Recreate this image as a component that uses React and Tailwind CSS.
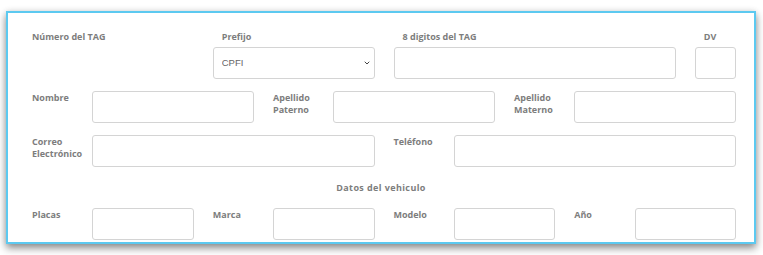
import { ChevronDown } from 'lucide-react';

const label = 'text-[9px] leading-[12px] font-bold text-[#7d7d7d] pr-[19px]';
const input = 'block w-full h-[32px] border border-[#d4d4d4] rounded-[3px] bg-white';

function Field({ span, children }) {
  return <div className={`${span} pr-[19px]`}>{children}</div>;
}

export default function App() {
  return (
    <div className="w-[763px] h-[255px] bg-white pt-[11px] pl-[6px]" style={{ fontFamily: "'Open Sans', sans-serif" }}>
      <div className="w-[750px] border-2 border-[#5cc9f0] bg-white shadow-[0_4px_8px_rgba(0,0,0,0.45),0_0_6px_rgba(0,0,0,0.08)] pl-[24px] pb-[2px]">
        <div className="w-[723px] grid grid-cols-[repeat(12,60.25px)]">
          {/* TAG */}
          <div className="col-span-3 pt-[18px]">
            <p className={label}>Número del TAG</p>
          </div>
          <div className="col-span-3 pr-[19px] pt-[18px]">
            <p className={`${label} pl-[9px]`}>Prefijo</p>
            <div className="relative mt-[4px]">
              <select className="appearance-none w-full h-[32px] border border-[#d4d4d4] rounded-[3px] bg-white pl-[8px] text-[9.5px] text-[#666]" style={{ fontFamily: "'Liberation Sans', sans-serif" }} defaultValue="CPFI">
                <option>CPFI</option>
              </select>
              <ChevronDown className="absolute right-[4px] top-[12px] w-[8px] h-[8px] text-[#444] pointer-events-none" strokeWidth={3} />
            </div>
          </div>
          <div className="col-span-5 pr-[19px] pt-[18px]">
            <p className={`${label} pl-[9px]`}>8 digitos del TAG</p>
            <div className={`${input} mt-[4px]`} />
          </div>
          <div className="col-span-1 pr-[19px] pt-[18px]">
            <p className={`${label} pl-[9px]`}>DV</p>
            <div className={`${input} mt-[4px]`} />
          </div>

          {/* Nombre */}
          <div className="col-span-1 pt-[13px]"><p className={label}>Nombre</p></div>
          <Field span="col-span-3"><div className={`${input} mt-[12px]`} /></Field>
          <div className="col-span-1 pt-[13px]"><p className={label}>Apellido Paterno</p></div>
          <Field span="col-span-3"><div className={`${input} mt-[12px]`} /></Field>
          <div className="col-span-1 pt-[13px]"><p className={label}>Apellido Materno</p></div>
          <Field span="col-span-3"><div className={`${input} mt-[12px]`} /></Field>

          {/* Contacto */}
          <div className="col-span-1 pt-[13px]"><p className={label}>Correo Electrónico</p></div>
          <Field span="col-span-5"><div className={`${input} mt-[12px]`} /></Field>
          <div className="col-span-1 pt-[13px]"><p className={label}>Teléfono</p></div>
          <Field span="col-span-5"><div className={`${input} mt-[12px]`} /></Field>
        </div>

        <p className="w-[746px] -ml-[24px] mt-[15px] text-center text-[9px] leading-[12px] font-bold text-[#7d7d7d] tracking-[0.4px]">Datos del vehiculo</p>

        <div className="w-[723px] grid grid-cols-[repeat(12,60.25px)] mt-[14px]">
          <div className="col-span-1 pt-[1px]"><p className={label}>Placas</p></div>
          <Field span="col-span-2"><div className={input} /></Field>
          <div className="col-span-1 pt-[1px]"><p className={label}>Marca</p></div>
          <Field span="col-span-2"><div className={input} /></Field>
          <div className="col-span-1 pt-[1px]"><p className={label}>Modelo</p></div>
          <Field span="col-span-2"><div className={input} /></Field>
          <div className="col-span-1 pt-[1px]"><p className={label}>Año</p></div>
          <Field span="col-span-2"><div className={input} /></Field>
        </div>
      </div>
    </div>
  );
}
